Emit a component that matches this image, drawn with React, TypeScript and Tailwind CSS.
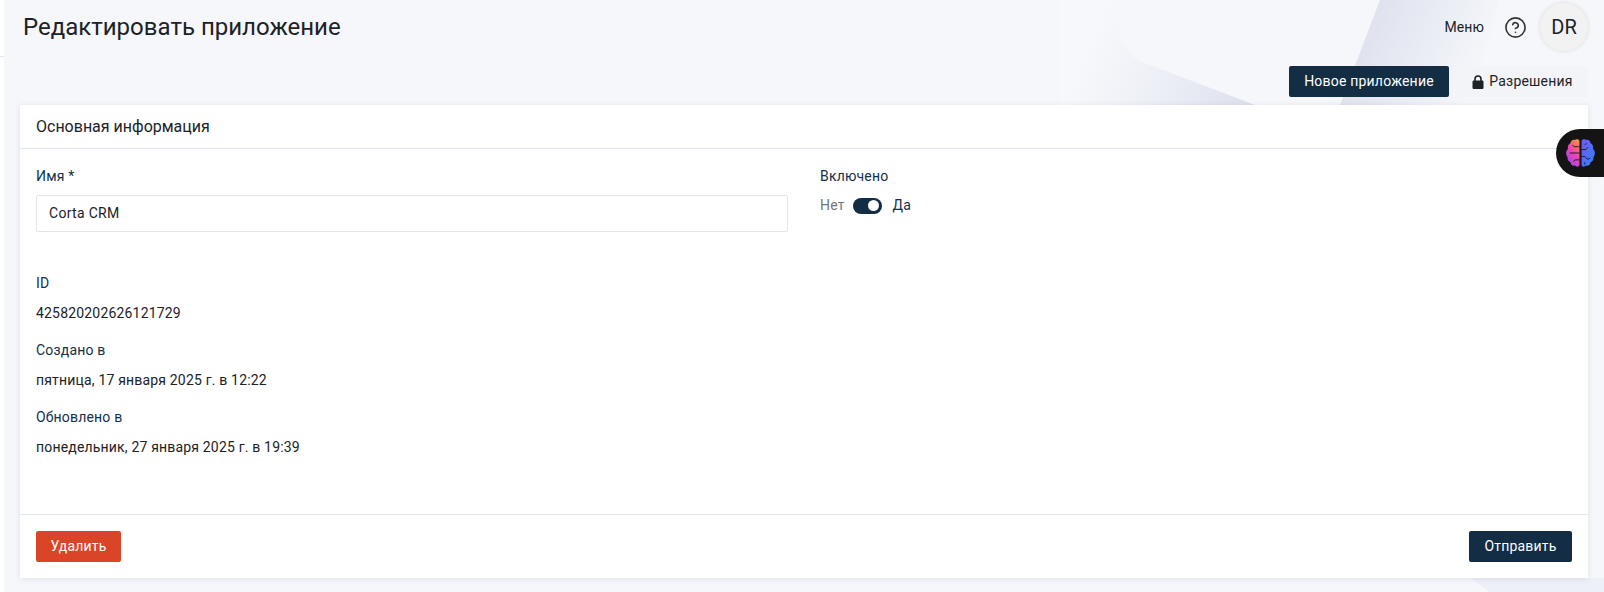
import React from 'react';
import { CircleHelp } from 'lucide-react';

const BackgroundShapes = () => (
  <svg className="absolute inset-0 pointer-events-none" width="1604" height="592" viewBox="0 0 1604 592">
    <defs>
      <linearGradient id="shapeA" gradientUnits="userSpaceOnUse" x1="1240" y1="105" x2="1090" y2="40">
        <stop offset="0" stopColor="#dfe2ee" />
        <stop offset="0.55" stopColor="#eef0f7" />
        <stop offset="1" stopColor="#f6f8fb" />
      </linearGradient>
      <linearGradient id="shapeB" x1="0" y1="0" x2="1" y2="0.3">
        <stop offset="0" stopColor="#d9dcea" />
        <stop offset="1" stopColor="#f5f7fb" />
      </linearGradient>
    </defs>
    <path d="M1060 0 H1118 C1116 30 1122 52 1142 62 L1255 105 H1060 Z" fill="url(#shapeA)" />
    <path d="M1380 0 H1500 L1470 105 H1340 Z" fill="url(#shapeB)" />
    <path d="M1470 578 H1604 V592 H1490 Z" fill="#eef0f7" />
  </svg>
);

const BrainIcon = () => (
  <svg width="29" height="28" viewBox="1.5 1.8 27 24.4" preserveAspectRatio="none">
    <defs>
      <linearGradient id="brainLeft" x1="0.8" y1="0" x2="0.2" y2="1">
        <stop offset="0" stopColor="#f7923a" />
        <stop offset="0.45" stopColor="#ee46b0" />
        <stop offset="1" stopColor="#a23ff0" />
      </linearGradient>
      <linearGradient id="brainRight" x1="0" y1="0" x2="1" y2="1">
        <stop offset="0" stopColor="#7a55f5" />
        <stop offset="1" stopColor="#2a86f7" />
      </linearGradient>
    </defs>
    <path d="M14 3.5 C14 2 11 1.4 9.5 2.6 C7.5 2.2 5.8 3.6 5.6 5.6 C3.6 6.4 2.8 8.6 3.4 10.4 C1.2 12.2 1 15.8 3 17.6 C2.6 19.8 3.8 21.6 5.6 22 C6 24.4 8 25.6 10 25 C11.4 26.6 14 26 14 24 Z" fill="url(#brainLeft)" />
    <path d="M16 3.5 C16 2 19 1.4 20.5 2.6 C22.5 2.2 24.2 3.6 24.4 5.6 C26.4 6.4 27.2 8.6 26.6 10.4 C28.8 12.2 29 15.8 27 17.6 C27.4 19.8 26.2 21.6 24.4 22 C24 24.4 22 25.6 20 25 C18.6 26.6 16 26 16 24 Z" fill="url(#brainRight)" />
    <path d="M14 14 H5 M14 8.5 H9 L7.5 7 M14 20 H10 L8.5 21.5 M16 11 H20 L22 9 M16 17 H19 L21.5 19.5 M21.5 19.5 L24 18.5 M19 7 L20.5 5.5 M19 22 L19 24" fill="none" stroke="#151515" strokeWidth="0.8" />
  </svg>
);

const LockIcon = () => (
  <svg width="12" height="14" viewBox="0 0 12 14" className="shrink-0">
    <path d="M3 6.5 V4 a3 3 0 0 1 6 0 V6.5" fill="none" stroke="#1c2226" strokeWidth="1.6" />
    <rect x="0.5" y="5.5" width="11" height="8.5" rx="1.2" fill="#1c2226" />
  </svg>
);

const Field = ({ label, value }: { label: string; value: string }) => (
  <div className="h-[67px]">
    <div className="h-[26px] text-[14px] leading-[26px] tracking-[0.18px] text-[#12304a]">{label}</div>
    <div className="mt-[4px] h-[26px] text-[14px] leading-[26px] tracking-[0.18px] text-[#1c2226]">{value}</div>
  </div>
);

const App = () => {
  return (
    <div
      className="relative h-[592px] w-[1604px] overflow-hidden bg-[#f5f7fb] text-[#1c2226]"
      style={{ fontFamily: 'Roboto, "Noto Sans", sans-serif' }}
    >
      <BackgroundShapes />

      <div className="relative flex h-full">
        {/* sidebar edge */}
        <div className="w-[4px] shrink-0 bg-white">
          <div className="h-[57px] border-b border-[#e3e7ee]" />
        </div>

        <div className="w-[1584px] pl-[16px]">
          <div className="flex h-[54px] items-center justify-between">
            <h1 className="pl-[3px] text-[24px] font-normal leading-[54px] text-[#1c2226]">Редактировать приложение</h1>
            <div className="flex items-center">
              <span className="text-[14px] tracking-[0.1px]">Меню</span>
              <CircleHelp size={23} strokeWidth={1.7} className="ml-[20px] text-[#333]" />
              <div className="ml-[13px] flex h-[48px] w-[48px] items-center justify-center rounded-full bg-[#f2f2f2] text-[20px] shadow-[0_0_4px_rgba(0,0,0,0.12)]">
                DR
              </div>
            </div>
          </div>

          <div className="mt-[12px] flex h-[31px] justify-end gap-2">
            <button className="h-[31px] w-[160px] rounded-[2px] bg-[#122d44] text-[14px] tracking-[0.2px] text-white">
              Новое приложение
            </button>
            <button className="flex h-[31px] w-[131px] items-center justify-center gap-[5px] rounded-[2px] bg-[#f2f4f8] text-[14px] tracking-[0.2px] text-[#1c2226]">
              <LockIcon />
              Разрешения
            </button>
          </div>

          <div className="mt-[8px] flex h-[473px] flex-col bg-white shadow-[0_1px_6px_rgba(30,40,70,0.1)]">
            <div className="flex h-[44px] shrink-0 items-center border-b border-[#e2e6ee] pl-[16px] text-[16px]">
              Основная информация
            </div>

            <div className="flex-1 px-[16px] pt-[14px]">
              <div className="flex">
                <div className="w-[752px]">
                  <div className="h-[26px] text-[14px] leading-[26px] tracking-[0.18px] text-[#12304a]">Имя *</div>
                  <div className="mt-[6px] flex h-[37px] items-center rounded-[2px] border border-[#e2e6ee] pl-[12px] text-[14px] tracking-[0.3px]">
                    Corta CRM
                  </div>
                </div>
                <div className="ml-[32px]">
                  <div className="h-[26px] text-[14px] leading-[26px] tracking-[0.18px] text-[#12304a]">Включено</div>
                  <div className="mt-[6px] flex items-center text-[14px] tracking-[0.18px]">
                    <span className="text-[#6f767c]">Нет</span>
                    <div className="ml-[8px] flex h-[16px] w-[29px] items-center justify-end rounded-full bg-[#122d44] pr-[3px]">
                      <div className="h-[11px] w-[11px] rounded-full bg-white" />
                    </div>
                    <span className="ml-[11px] text-[#12304a]">Да</span>
                  </div>
                </div>
              </div>

              <div className="mt-[38px]">
                <Field label="ID" value="425820202626121729" />
                <Field label="Создано в" value="пятница, 17 января 2025 г. в 12:22" />
                <Field label="Обновлено в" value="понедельник, 27 января 2025 г. в 19:39" />
              </div>
            </div>

            <div className="flex h-[64px] shrink-0 items-center justify-between border-t border-[#e2e6ee] px-[16px]">
              <button className="h-[31px] w-[85px] rounded-[2px] bg-[#db4527] text-[14px] tracking-[0.2px] text-white">
                Удалить
              </button>
              <button className="h-[31px] w-[103px] rounded-[2px] bg-[#122d44] text-[14px] tracking-[0.2px] text-white">
                Отправить
              </button>
            </div>
          </div>
        </div>
      </div>

      {/* floating assistant tab */}
      <div className="absolute right-0 top-[129px] flex h-[48px] w-[48px] items-center rounded-l-[24px] bg-[#141414] pl-[10px]">
        <BrainIcon />
      </div>
    </div>
  );
};

export default App;
